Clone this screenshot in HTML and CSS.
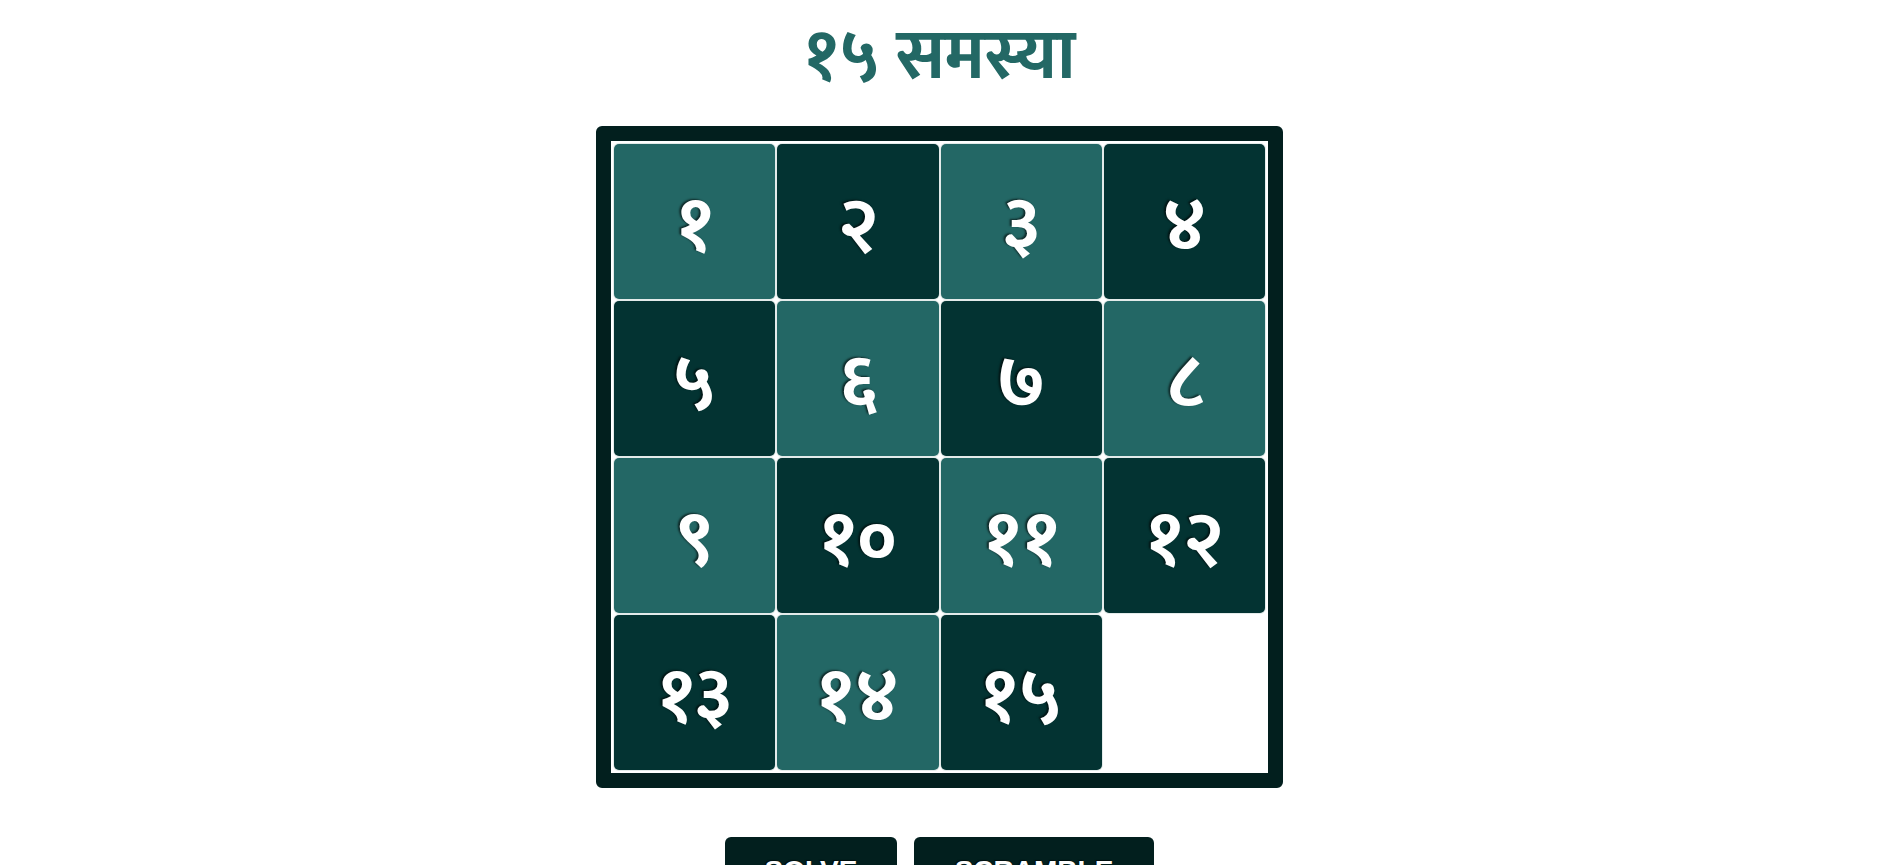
FILE: index.html
```html
<!DOCTYPE html>
<html lang="ne">
<head>
<meta charset="utf-8">
<title>१५ समस्या</title>
<link rel="stylesheet" href="styles.css">
</head>
<body>
<main class="app">
  <h1 class="title">१५ समस्या</h1>
  <div class="board">
    <div class="grid">
      <div class="tile light">१</div>
      <div class="tile dark">२</div>
      <div class="tile light">३</div>
      <div class="tile dark">४</div>
      <div class="tile dark">५</div>
      <div class="tile light">६</div>
      <div class="tile dark">७</div>
      <div class="tile light">८</div>
      <div class="tile light">९</div>
      <div class="tile dark">१०</div>
      <div class="tile light">११</div>
      <div class="tile dark">१२</div>
      <div class="tile dark">१३</div>
      <div class="tile light">१४</div>
      <div class="tile dark">१५</div>
      <div class="tile empty"></div>
    </div>
  </div>
  <div class="controls">
    <button class="btn solve">SOLVE</button>
    <button class="btn scramble">SCRAMBLE</button>
  </div>
</main>
</body>
</html>
```

FILE: styles.css
```css
* { box-sizing: border-box; }
html, body { margin: 0; padding: 0; background: #ffffff; }
body { font-family: "Mukta", "Hind", "Kalimati", "Gargi", "Samyak Devanagari", "Noto Serif Devanagari", "Nakula", "Lohit Devanagari", "Noto Sans", "Liberation Sans", sans-serif; overflow: hidden; }
.app { display: flex; flex-direction: column; align-items: center; padding-right: 16px; }
.title {
  margin: 17px 0 0;
  height: 109px;
  font-size: 70px;
  line-height: 80px;
  font-weight: 700;
  color: #236865;
}
.board {
  width: 687px;
  height: 662px;
  border: 15px solid #021f1e;
  border-radius: 6px;
  background: #ffffff;
  padding: 3px;
}
.grid {
  display: grid;
  grid-template-columns: repeat(4, 1fr);
  grid-template-rows: repeat(4, 1fr);
  column-gap: 2px;
  row-gap: 2px;
  height: 100%;
}
.tile {
  display: flex;
  align-items: center;
  justify-content: center;
  padding-top: 10px;
  border-radius: 5px;
  color: #ffffff;
  font-size: 75px;
  font-weight: 700;
  text-shadow: -2px -1px 2px rgba(0,0,0,0.6);
  box-shadow: 0 0 0 1px rgba(200,215,214,0.5);
}
.tile.light { background: #236765; }
.tile.dark { background: #033332; }
.tile.empty { background: transparent; box-shadow: none; }
.controls {
  display: flex;
  gap: 17px;
  margin-top: 49px;
}
.btn {
  display: flex;
  justify-content: center;
  align-items: flex-start;
  background: #021f1e;
  color: #ffffff;
  border: none;
  border-radius: 6px;
  height: 60px;
  font-family: "Liberation Sans", Arial, sans-serif;
  font-weight: 700;
  font-size: 28px;
  padding: 18px 0 0;
  text-shadow: -1px -1px 1px rgba(0,0,0,0.6);
}
.btn.solve { width: 172px; }
.btn.scramble { width: 240px; }
```
